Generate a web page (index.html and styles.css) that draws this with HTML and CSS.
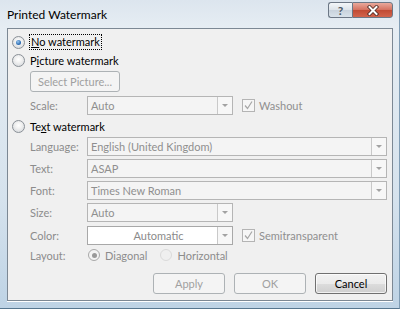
FILE: index.html
```html
<!DOCTYPE html>
<html lang="en">
  <head>
    <meta charset="UTF-8" />
    <title>Printed Watermark</title>
    <link rel="stylesheet" href="styles.css">
  </head>
  <body>
    <div class="window">
      <div class="titlebar">
        <span class="title">Printed Watermark</span>
        <div class="caption-buttons">
          <div class="cap-btn help">?</div>
          <div class="cap-btn close">
            <svg width="14" height="11" viewBox="0 0 14 11">
              <path d="M3.5 2 L10.5 9 M10.5 2 L3.5 9" stroke="#4a2620" stroke-width="3.6" stroke-linecap="square" fill="none" />
              <path d="M3.5 2 L10.5 9 M10.5 2 L3.5 9" stroke="#fff" stroke-width="2" stroke-linecap="square" fill="none" />
            </svg>
          </div>
        </div>
      </div>

      <div class="panel">
        <div class="option first">
          <span class="radio checked"></span>
          <span class="focus"><u>N</u>o watermark</span>
        </div>
        <div class="option">
          <span class="radio"></span>
          <span>P<u>i</u>cture watermark</span>
        </div>

        <div class="indent">
          <div class="button disabled select-btn">Select Picture...</div>
          <div class="field-row scale-row">
            <span class="label">Scale:</span>
            <div class="combo narrow"><span class="value">Auto</span><span class="arrow"></span></div>
            <span class="check"><svg width="9" height="9" viewBox="0 0 9 9"><path d="M1 4.5 L3.5 7.5 L8 0.5" stroke="#a6a6a6" stroke-width="1.2" fill="none" /></svg></span>
            <span class="check-label">Washout</span>
          </div>
        </div>

        <div class="option text-opt">
          <span class="radio"></span>
          <span>Te<u>x</u>t watermark</span>
        </div>

        <div class="indent">
          <div class="field-row">
            <span class="label">Language:</span>
            <div class="combo wide"><span class="value">English (United Kingdom)</span><span class="arrow"></span></div>
          </div>
          <div class="field-row">
            <span class="label">Text:</span>
            <div class="combo wide"><span class="value">ASAP</span><span class="arrow"></span></div>
          </div>
          <div class="field-row">
            <span class="label">Font:</span>
            <div class="combo wide"><span class="value">Times New Roman</span><span class="arrow"></span></div>
          </div>
          <div class="field-row">
            <span class="label">Size:</span>
            <div class="combo narrow"><span class="value">Auto</span><span class="arrow"></span></div>
          </div>
          <div class="field-row color-row">
            <span class="label">Color:</span>
            <div class="combo narrow color"><span class="value">Automatic</span><span class="arrow"></span></div>
            <span class="check"><svg width="9" height="9" viewBox="0 0 9 9"><path d="M1 4.5 L3.5 7.5 L8 0.5" stroke="#a6a6a6" stroke-width="1.2" fill="none" /></svg></span>
            <span class="check-label">Semitransparent</span>
          </div>
          <div class="field-row layout-row">
            <span class="label">Layout:</span>
            <span class="radio small checked disabled"></span>
            <span class="radio-label">Diagonal</span>
            <span class="radio small faded"></span>
            <span class="radio-label">Horizontal</span>
          </div>
        </div>

        <div class="actions">
          <div class="button disabled">Apply</div>
          <div class="button disabled">OK</div>
          <div class="button">Cancel</div>
        </div>
      </div>
    </div>
  </body>
</html>
```

FILE: styles.css
```css
body {
  margin: 0;
  font-family: Lato, "Liberation Sans", sans-serif;
  font-size: 11px;
  color: #000;
  background: #fff;
}
.window {
  width: 400px;
  height: 309px;
  box-sizing: border-box;
  background: linear-gradient(180deg, #dce5ee 0, #e6edf3 28px, #d5e2ed 200px, #bed3e5 100%);
  border-bottom: 1px solid #56768f;
  border-right: 1px solid #7f9cb4;
  display: flex;
  flex-direction: column;
}
.titlebar {
  height: 28px;
  display: flex;
  align-items: flex-start;
  justify-content: space-between;
}
.title {
  margin: 7px 0 0 7px;
  font-size: 12px;
  color: #000;
}
.caption-buttons {
  display: flex;
  margin: 2px 6px 0 0;
}
.cap-btn {
  height: 14px;
  border: 1px solid #6c7785;
  display: flex;
  align-items: center;
  justify-content: center;
}
.help {
  width: 23px;
  border-right: none;
  border-radius: 3px 0 0 3px;
  background: linear-gradient(180deg, #f3f6f9 0, #dde4ea 50%, #c8d2dc 51%, #d9e2ea 100%);
  color: #4d5866;
  font-size: 12px;
  font-weight: bold;
}
.close {
  width: 39px;
  border-radius: 0 3px 3px 0;
  background: linear-gradient(180deg, #e9a99c 0, #d4705e 50%, #c04a33 51%, #d2644c 100%);
}
.panel {
  margin: 0 6px 0 7px;
  height: 273px;
  box-sizing: border-box;
  background: #f0f0f0;
  border: 1px solid #7c8894;
  box-shadow: 0 1px 0 #ffffff;
  padding: 5px 5px 0 4px;
  display: flex;
  flex-direction: column;
}
.option {
  height: 16px;
  display: flex;
  align-items: center;
  gap: 5px;
  margin-top: 2px;
}
.option.first {
  margin-top: 0;
}
.option.text-opt {
  margin-top: 3px;
}
.focus {
  outline: 1px dotted #000;
  padding: 0 1px;
  line-height: 14px;
}
.radio {
  width: 11px;
  height: 11px;
  border-radius: 50%;
  border: 1px solid #8a9097;
  background: radial-gradient(circle at 50% 40%, #ffffff 0, #f2f2f2 35%, #cfd3d7 100%);
  position: relative;
  flex: none;
}
.radio.checked::after {
  content: "";
  position: absolute;
  left: 3px;
  top: 3px;
  width: 5px;
  height: 5px;
  border-radius: 50%;
  background: radial-gradient(circle at 40% 35%, #9cc8f0 0, #2e6fb5 60%, #1c4f8d 100%);
}
.radio.small {
  width: 10px;
  height: 10px;
}
.radio.disabled {
  border-color: #a9a9a9;
  background: #f4f4f4;
}
.radio.disabled.checked::after {
  left: 2.5px;
  top: 2.5px;
  background: #9a9a9a;
}
.radio.faded {
  border-color: #dadada;
  background: #efefef;
}
.indent {
  margin-left: 18px;
  display: flex;
  flex-direction: column;
}
.button {
  width: 72px;
  height: 21px;
  box-sizing: border-box;
  border: 1px solid #707070;
  border-radius: 3px;
  background: linear-gradient(180deg, #f2f2f2 0, #ebebeb 50%, #dddddd 51%, #cfcfcf 100%);
  box-shadow: inset 0 0 0 1px rgba(255, 255, 255, 0.7);
  display: flex;
  align-items: center;
  justify-content: center;
  color: #000;
}
.button.disabled {
  border-color: #adb2b5;
  background: #f4f4f4;
  box-shadow: none;
  color: #a0a0a0;
}
.select-btn {
  width: 90px;
  margin-top: 3px;
}
.field-row {
  height: 19px;
  display: flex;
  align-items: center;
  margin-top: 3px;
}
.scale-row {
  margin-top: 4px;
}
.color-row {
  margin-top: 4px;
}
.layout-row {
  margin-top: 2px;
  height: 16px;
}
.label {
  width: 57px;
  flex: none;
  color: #8c8c8c;
}
.combo {
  height: 19px;
  box-sizing: border-box;
  border: 1px solid #b5b5b5;
  background: #f4f4f4;
  display: flex;
  align-items: center;
  justify-content: space-between;
  color: #8f8f8f;
}
.combo.wide {
  flex: 1;
}
.combo.narrow {
  width: 146px;
}
.combo .value {
  padding-left: 3px;
}
.combo .arrow {
  width: 15px;
  height: 17px;
  box-sizing: border-box;
  border-left: 1px solid #c9c9c9;
  background: #f7f7f7;
  position: relative;
}
.combo .arrow::after {
  content: "";
  position: absolute;
  left: 4px;
  top: 7px;
  border-left: 3px solid transparent;
  border-right: 3px solid transparent;
  border-top: 3px solid #a2a2a2;
}
.combo.color {
  background: #fff;
  border-color: #a8a8a8;
}
.combo.color .value {
  flex: 1;
  text-align: center;
  padding-left: 12px;
  color: #8a8a8a;
}
.check {
  width: 11px;
  height: 11px;
  border: 1px solid #b4b4b4;
  background: #f6f6f6;
  margin-left: 9px;
  display: flex;
  align-items: center;
  justify-content: center;
  flex: none;
}
.check-label {
  margin-left: 4px;
  color: #8f8f8f;
}
.radio-label {
  margin-left: 5px;
  margin-right: 12px;
  color: #8c8c8c;
}
.layout-row .radio {
  margin-left: 1px;
}
.actions {
  display: flex;
  justify-content: flex-end;
  gap: 9px;
  margin-top: 10px;
}
```
